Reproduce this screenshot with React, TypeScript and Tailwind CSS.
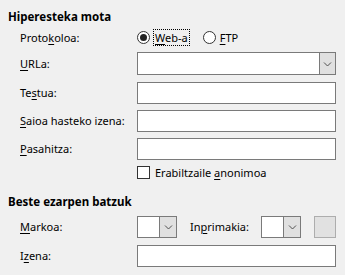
import React from "react";

const U = ({ children }: { children: React.ReactNode }) => (
  <span className="underline decoration-1 underline-offset-[2px]">{children}</span>
);

const Chevron = () => (
  <svg width="9" height="6" viewBox="0 0 9 6" className="block">
    <path d="M1 1.5 L4.5 5 L8 1.5" fill="none" stroke="#505050" strokeWidth="1" />
  </svg>
);

const Label = ({ children }: { children: React.ReactNode }) => (
  <div className="w-[117px] shrink-0 leading-[16px]">{children}</div>
);

const Input = () => (
  <div className="w-[199px] h-[22px] bg-white border border-[#7a7a7a]" />
);

export default function App() {
  return (
    <div
      className="w-[345px] h-[275px] bg-[#f0f0f0] text-[11px] text-black overflow-hidden"
      style={{ fontFamily: '"Noto Sans", "Open Sans", sans-serif' }}
    >
      <div className="pt-[9px] pl-[8px] font-bold leading-[16px] text-[11.5px]">Hiperesteka mota</div>

      <div className="pl-[20px]">
        {/* Protokoloa */}
        <div className="mt-[4px] flex items-center h-[17px]">
          <Label>
            Proto<U>k</U>oloa:
          </Label>
          <div className="flex items-center">
            <span className="w-[13px] h-[13px] rounded-full border border-[#333] bg-white flex items-center justify-center">
              <span className="w-[7px] h-[7px] rounded-full bg-[#222]" />
            </span>
            <span className="ml-[3px] h-[17px] border border-dotted border-black px-[1px] leading-[15px]">
              <U>W</U>eb-a
            </span>
            <span className="ml-[13px] w-[13px] h-[13px] rounded-full border border-[#333] bg-white" />
            <span className="ml-[4px] leading-[16px]">
              <U>F</U>TP
            </span>
          </div>
        </div>

        {/* URLa */}
        <div className="mt-[6px] flex items-center h-[23px]">
          <Label>
            <U>U</U>RLa:
          </Label>
          <div className="w-[199px] h-[23px] bg-white border border-[#7a7a7a] flex justify-end">
            <div className="w-[16px] h-full bg-[#e0e0e0] border-l border-[#7a7a7a] flex items-center justify-center">
              <Chevron />
            </div>
          </div>
        </div>

        {/* Testua */}
        <div className="mt-[7px] flex items-center h-[22px]">
          <Label>
            Te<U>s</U>tua:
          </Label>
          <Input />
        </div>

        {/* Saioa */}
        <div className="mt-[6px] flex items-center h-[22px]">
          <Label>
            <U>S</U>aioa hasteko izena:
          </Label>
          <Input />
        </div>

        {/* Pasahitza */}
        <div className="mt-[6px] flex items-center h-[22px]">
          <Label>
            <U>P</U>asahitza:
          </Label>
          <Input />
        </div>

        {/* Checkbox */}
        <div className="mt-[6px] flex items-center h-[13px]">
          <div className="w-[117px] shrink-0" />
          <span className="w-[13px] h-[13px] border border-[#333] bg-white" />
          <span className="ml-[5px] leading-[16px]">
            Erabiltzaile <U>a</U>nonimoa
          </span>
        </div>
      </div>

      <div className="mt-[15px] pl-[8px] font-bold leading-[16px] text-[11.5px]">Beste ezarpen batzuk</div>

      <div className="pl-[20px]">
        {/* Markoa / Inprimakia */}
        <div className="mt-[6px] flex items-center h-[22px]">
          <Label>
            <U>M</U>arkoa:
          </Label>
          <div className="w-[40px] h-[22px] bg-white border border-[#7a7a7a] flex justify-end">
            <div className="w-[17px] h-full bg-[#e0e0e0] border-l border-[#7a7a7a] flex items-center justify-center">
              <Chevron />
            </div>
          </div>
          <div className="ml-[13px] w-[71px] leading-[16px]">
            In<U>p</U>rimakia:
          </div>
          <div className="w-[40px] h-[22px] bg-white border border-[#7a7a7a] flex justify-end">
            <div className="w-[17px] h-full bg-[#e0e0e0] border-l border-[#7a7a7a] flex items-center justify-center">
              <Chevron />
            </div>
          </div>
          <div className="ml-[13px] w-[22px] h-[22px] bg-[#e1e1e1] border border-[#adadad]" />
        </div>

        {/* Izena */}
        <div className="mt-[7px] flex items-center h-[22px]">
          <Label>
            I<U>z</U>ena:
          </Label>
          <Input />
        </div>
      </div>
    </div>
  );
}
